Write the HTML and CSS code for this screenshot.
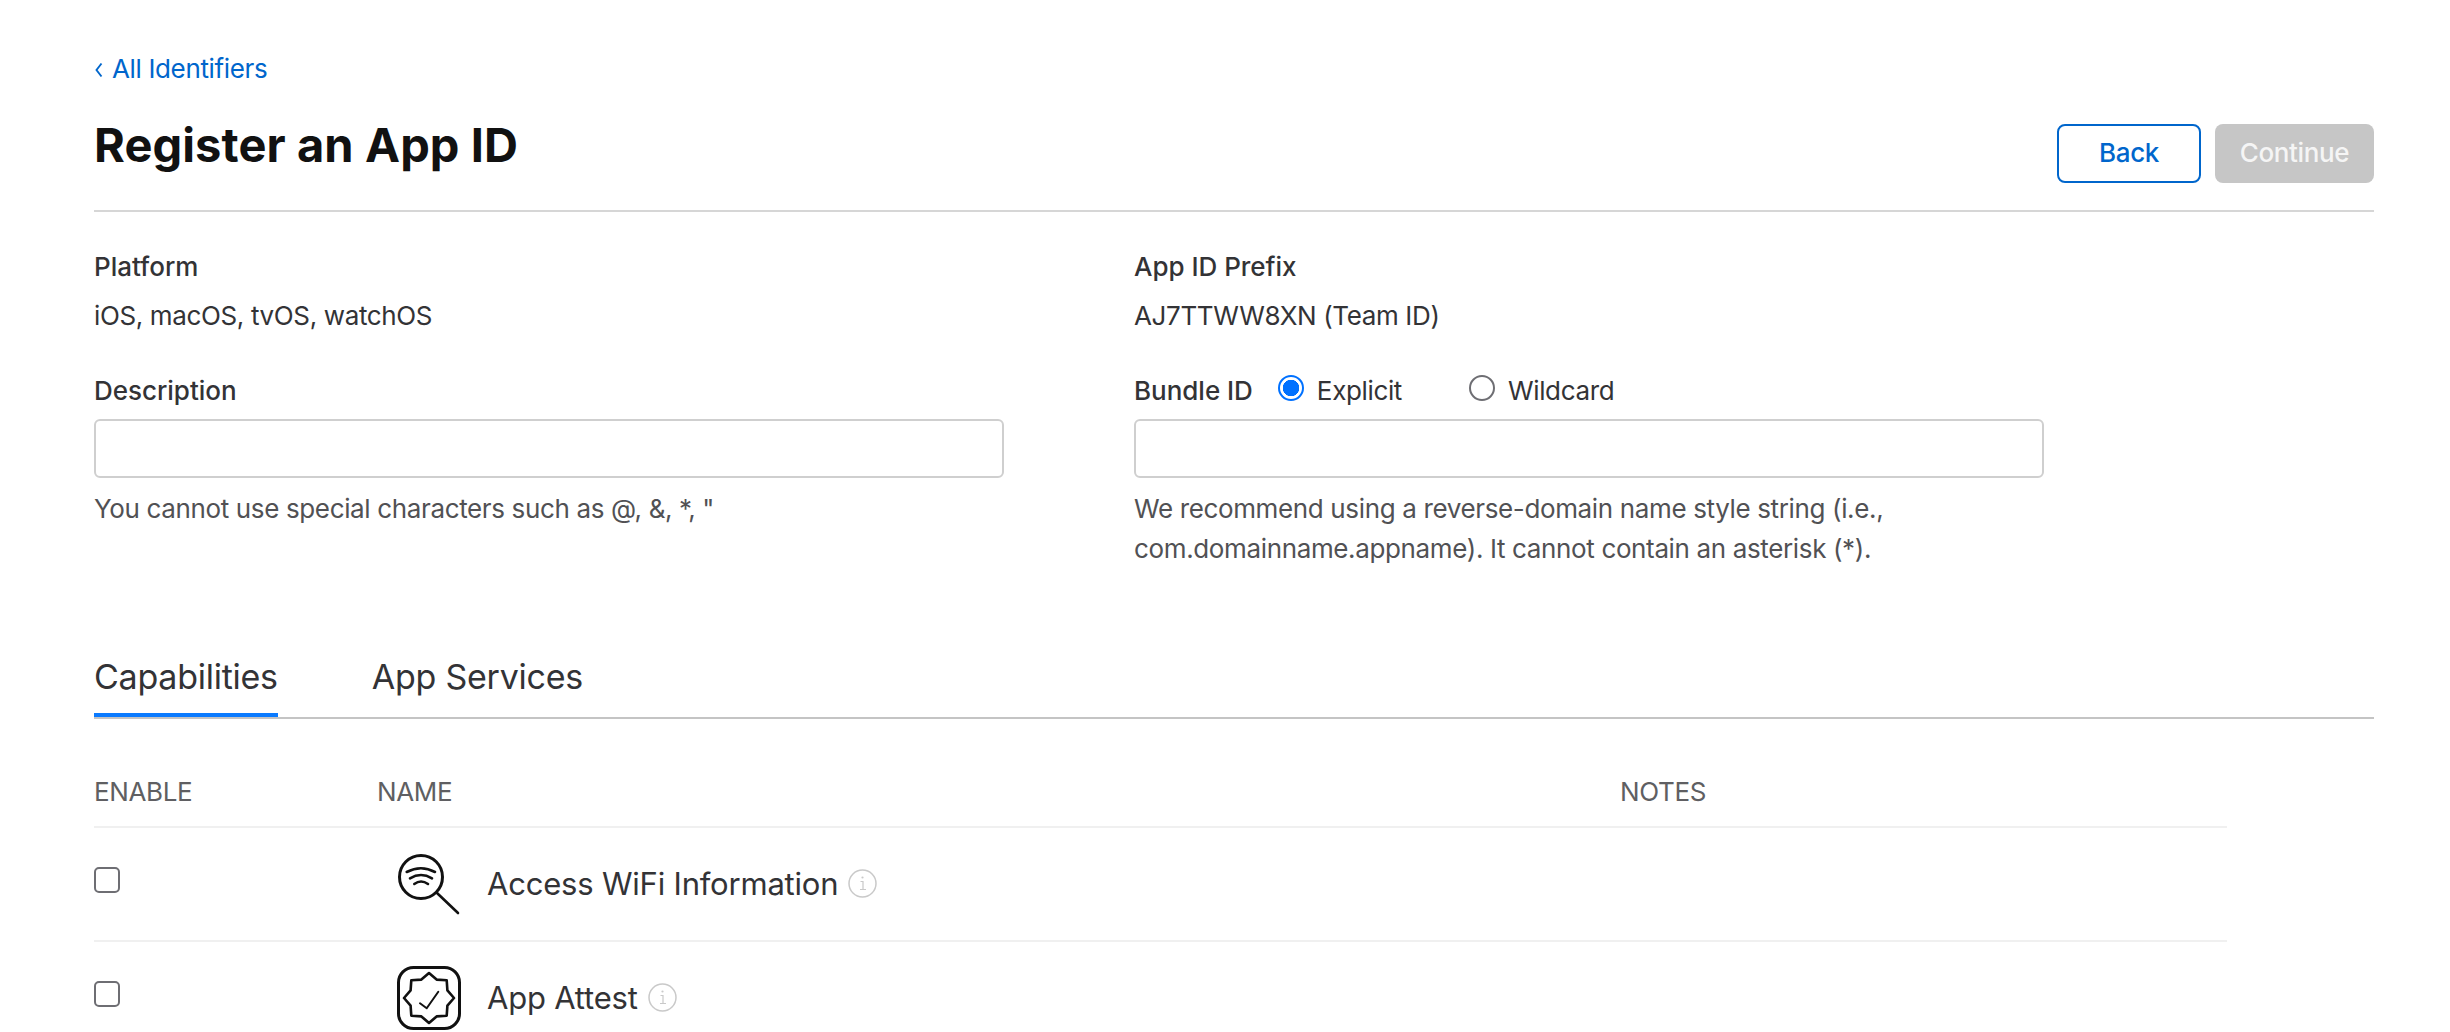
FILE: index.html
```html
<!DOCTYPE html>
<html lang="en">
<head>
<meta charset="utf-8">
<title>Register an App ID</title>
<link rel="stylesheet" href="styles.css">
</head>
<body>
<main class="page">
  <a class="back-link" href="#"><svg class="chevron" viewBox="0 0 8 16" fill="none" stroke="#0066cc" stroke-width="1.9"><path d="M6.5 1.5 1.5 8 6.5 14.5"/></svg>All Identifiers</a>
  <header class="page-header">
    <h1 class="title">Register an App ID</h1>
    <div class="actions">
      <button class="btn btn-outline" type="button">Back</button>
      <button class="btn btn-disabled" type="button">Continue</button>
    </div>
  </header>

  <section class="form-grid">
    <div class="field-col">
      <div class="label">Platform</div>
      <div class="value">iOS, macOS, tvOS, watchOS</div>
      <div class="label label-field">Description</div>
      <input class="text-input" type="text">
      <p class="hint">You cannot use special characters such as @, &amp;, *, "</p>
    </div>
    <div class="field-col">
      <div class="label">App ID Prefix</div>
      <div class="value">AJ7TTWW8XN (Team ID)</div>
      <div class="label label-field bundle-row">
        <span>Bundle ID</span>
        <label class="radio-item radio-explicit"><input class="radio" type="radio" name="bundle" checked><span class="radio-text">Explicit</span></label>
        <label class="radio-item"><input class="radio" type="radio" name="bundle"><span class="radio-text">Wildcard</span></label>
      </div>
      <input class="text-input" type="text">
      <p class="hint">We recommend using a reverse-domain name style string (i.e.,<br>com.domainname.appname). It cannot contain an asterisk (*).</p>
    </div>
  </section>

  <nav class="tabs">
    <a class="tab tab-active" href="#">Capabilities</a>
    <a class="tab" href="#">App Services</a>
  </nav>

  <section class="table">
    <div class="table-head">
      <div>ENABLE</div>
      <div>NAME</div>
      <div>NOTES</div>
    </div>
    <div class="table-row">
      <input class="check" type="checkbox">
      <div class="name-cell">
        <svg class="cap-icon" viewBox="0 0 64 64" fill="none" stroke="#111" stroke-linecap="round" stroke-linejoin="round">
          <circle cx="24" cy="25" r="21.5" stroke-width="3"/>
          <path d="M40 41 61 61" stroke-width="2.6"/>
          <path d="M9.7 20Q24 12.6 38 20M13 26.3Q24 19.8 35 26.3M17.3 32Q24 27 31 32" stroke-width="2.6"/>
        </svg>
        <span class="cap-name">Access WiFi Information</span>
        <svg class="info-icon" viewBox="0 0 29 29" fill="none" stroke="#c9c9c9">
          <circle cx="14.5" cy="14.5" r="13.5" stroke-width="1.5"/>
          <path d="M12.5 12.5H15V20.5M12 20.5H18" stroke-width="1.2"/>
          <circle cx="14.5" cy="8.5" r="1.1" fill="#c9c9c9" stroke="none"/>
        </svg>
      </div>
      <div></div>
    </div>
    <div class="table-row">
      <input class="check" type="checkbox">
      <div class="name-cell">
        <svg class="cap-icon" viewBox="0 0 64 64" fill="none" stroke="#111" stroke-linecap="round" stroke-linejoin="round">
          <rect x="1.5" y="1.5" width="61" height="61" rx="15" stroke-width="3"/>
          <path d="M32 7 39.6 13.6 49.7 14.3 50.4 24.4 57 32 50.4 39.6 49.7 49.7 39.6 50.4 32 57 24.4 50.4 14.3 49.7 13.6 39.6 7 32 13.6 24.4 14.3 14.3 24.4 13.6Z" stroke-width="2.6"/>
          <path d="M23 37.3 29.7 42.3 41.3 25.7" stroke-width="2"/>
        </svg>
        <span class="cap-name">App Attest</span>
        <svg class="info-icon" viewBox="0 0 29 29" fill="none" stroke="#c9c9c9">
          <circle cx="14.5" cy="14.5" r="13.5" stroke-width="1.5"/>
          <path d="M12.5 12.5H15V20.5M12 20.5H18" stroke-width="1.2"/>
          <circle cx="14.5" cy="8.5" r="1.1" fill="#c9c9c9" stroke="none"/>
        </svg>
      </div>
      <div></div>
    </div>
  </section>
</main>
</body>
</html>
```

FILE: styles.css
```css
* { box-sizing: border-box; }
html, body { margin: 0; height: 1032px; overflow: hidden; background: #fff; }
body { font-family: Inter, "Liberation Sans", sans-serif; color: #333336; font-size: 26px; line-height: 40px; letter-spacing: -0.36px; }
.page { padding: 49px 76px 0 94px; }
.back-link { display: flex; align-items: center; color: #0066cc; text-decoration: none; }
.chevron { width: 8px; height: 16px; margin: 2px 9px 0 1px; flex: none; }
.page-header { display: flex; justify-content: space-between; align-items: flex-start; margin-top: 35px; padding-bottom: 27px; border-bottom: 2px solid #d6d6d6; }
.title { margin: -2px 0 0; font-size: 47px; line-height: 46px; font-weight: 700; color: #111; letter-spacing: 0.1px; }
.actions { display: flex; gap: 14px; }
.btn { height: 59px; border-radius: 8px; font: inherit; font-weight: 500; letter-spacing: inherit; line-height: 1; padding: 0 0 2px; }
.btn-outline { width: 144px; background: #fff; border: 2px solid #0066cc; color: #0066cc; }
.btn-disabled { width: 159px; background: #c6c6c6; border: 0; color: #f5f5f5; }
.form-grid { display: grid; grid-template-columns: 1040px 1fr; padding-top: 35px; }
.field-col { display: flex; flex-direction: column; align-items: flex-start; }
.label { font-weight: 500; letter-spacing: -0.02px; }
.value { margin-top: 9px; }
.label-field { margin-top: 35px; }
.bundle-row { display: flex; align-items: center; }
.radio-item { display: flex; align-items: center; font-weight: 400; letter-spacing: -0.36px; margin-left: 25px; }
.radio-explicit { margin-right: 42px; }
.radio-text { margin-left: 13px; }
.radio { appearance: none; width: 26px; height: 26px; margin: -6px 0 0; border: 2px solid #6e6e73; border-radius: 50%; background: #fff; }
.radio:checked { border: 2.5px solid #0071ff; background: radial-gradient(circle, #0071ff 0 8px, #fff 8.5px); }
.text-input { width: 910px; height: 59px; margin-top: 8px; border: 2px solid #cfcfcf; border-radius: 6px; background: #fff; }
.hint { margin: 11px 0 0; color: #515154; }
.tabs { display: flex; gap: 94px; margin-top: 83px; border-bottom: 2px solid #c4c4c4; }
.tab { display: block; padding-bottom: 11px; border-bottom: 4px solid transparent; font-size: 34px; line-height: 50px; letter-spacing: -0.25px; color: #333336; text-decoration: none; }
.tab-active { border-bottom-color: #0a7aff; }
.table { width: 2133px; margin-top: 53px; }
.table-head, .table-row { display: grid; grid-template-columns: 283px 1243px 1fr; }
.table-head { padding-bottom: 14px; color: #5f5f62; }
.table-row { height: 114px; align-items: center; padding-bottom: 1px; border-top: 2px solid #f0f0f0; }
.check { appearance: none; width: 26px; height: 26px; margin: 0 0 7px; border: 2px solid #6e6e73; border-radius: 5px; background: #fff; }
.name-cell { display: flex; align-items: center; padding-left: 20px; }
.cap-icon { width: 64px; height: 64px; flex: none; }
.cap-name { margin-left: 26px; font-size: 31px; line-height: 44px; letter-spacing: -0.2px; color: #333336; }
.info-icon { width: 29px; height: 29px; margin-left: 10px; flex: none; }
```
